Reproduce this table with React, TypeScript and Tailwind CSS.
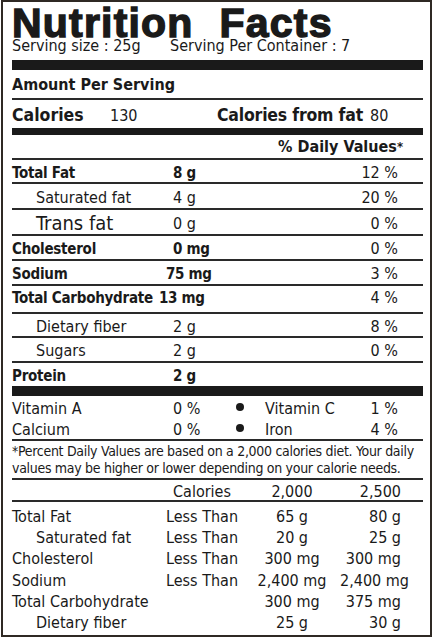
const COND = "font-['DejaVu_Sans_Condensed','Liberation_Sans',sans-serif]";

type Row = {
  label: string;
  amount?: string;
  pct?: string;
  bold?: boolean;
  indent?: boolean;
  big?: boolean;
  h: string;
  pb: string;
  shift?: string;
};

const rows: Row[] = [
  { label: 'Total Fat', amount: '8 g', pct: '12 %', bold: true, h: 'h-[22px]', pb: 'pb-[0.5px]' },
  { label: 'Saturated fat', amount: '4 g', pct: '20 %', indent: true, h: 'h-[24px]', pb: 'pb-[1.5px]' },
  { label: 'Trans fat', amount: '0 g', pct: '0 %', indent: true, big: true, h: 'h-[24px]', pb: 'pb-[1px]' },
  { label: 'Cholesterol', amount: '0 mg', pct: '0 %', bold: true, h: 'h-[23px]', pb: 'pb-[1.5px]' },
  { label: 'Sodium', amount: '75 mg', pct: '3 %', bold: true, h: 'h-[23px]', pb: 'pb-[1.5px]', shift: '-ml-[7px]' },
  { label: 'Total Carbohydrate', amount: '13 mg', pct: '4 %', bold: true, h: 'h-[26px]', pb: 'pb-[5px]', shift: '-ml-[14px]' },
  { label: 'Dietary fiber', amount: '2 g', pct: '8 %', indent: true, h: 'h-[22px]', pb: 'pb-[0.5px]' },
  { label: 'Sugars', amount: '2 g', pct: '0 %', indent: true, h: 'h-[23px]', pb: 'pb-[1.5px]' },
  { label: 'Protein', amount: '2 g', bold: true, h: 'h-[23px]', pb: 'pb-[1.5px]' },
];

const vitamins = [
  { a: 'Vitamin A', ap: '0 %', b: 'Vitamin C', bp: '1 %', h: 'h-[22px]' },
  { a: 'Calcium', ap: '0 %', b: 'Iron', bp: '4 %', h: 'h-[21px]' },
];

const refs = [
  { label: 'Total Fat', less: 'Less Than', a: '65 g', b: '80 g' },
  { label: 'Saturated fat', less: 'Less Than', a: '20 g', b: '25 g', indent: true },
  { label: 'Cholesterol', less: 'Less Than', a: '300 mg', b: '300 mg' },
  { label: 'Sodium', less: 'Less Than', a: '2,400 mg', b: '2,400 mg' },
  { label: 'Total Carbohydrate', less: '', a: '300 mg', b: '375 mg' },
  { label: 'Dietary fiber', less: '', a: '25 g', b: '30 g', indent: true },
];

function Line() {
  return <div className="h-[2px] bg-[#2a2a2a]" />;
}

export default function App() {
  return (
    <div className="w-[433px] h-[640px] bg-white">
      <div
        className={`ml-px w-[431px] h-[637px] overflow-hidden border-2 border-[#2f2924] pl-[9px] pr-[7px] text-[#1a1a1a] ${COND}`}
      >
        <div className="flex gap-[26px] pt-[5px] h-[38px] leading-[33px] text-[41px] font-bold tracking-[1.2px] font-['Liberation_Sans',sans-serif] [-webkit-text-stroke:1.4px_#1a1a1a]">
          <span>Nutrition</span>
          <span>Facts</span>
        </div>
        <div className="flex h-[12px] leading-[12px] text-[16px] whitespace-nowrap">
          <span className="w-[158px]">Serving size : 25g</span>
          <span>Serving Per Container : 7</span>
        </div>
        <div className="mt-[8px] h-[10px] bg-[#1a1a1a]" />

        <div className="pt-[3px] h-[28px] leading-[24px] text-[16px] font-bold">Amount Per Serving</div>
        <Line />
        <div className="flex items-baseline pt-[3px] h-[28px] leading-[25px] whitespace-nowrap">
          <span className="w-[98px] text-[17.5px] font-bold">Calories</span>
          <span className="w-[107px] text-[16px]">130</span>
          <span className="w-[153px] text-[17.5px] font-bold tracking-[-0.2px]">Calories from fat</span>
          <span className="text-[16px]">80</span>
        </div>
        <div className="h-[7px] bg-[#1a1a1a]" />
        <div className="flex justify-end pt-px pr-[20px] h-[23px] leading-[22px] text-[16px] font-bold">
          <span>
            % Daily Values<sup className="text-[13px] relative -top-[1px]">*</sup>
          </span>
        </div>
        <Line />

        {rows.map((r, i) => (
          <div key={r.label}>
            <div className={`flex items-end whitespace-nowrap ${r.h} ${r.pb}`}>
              <span
                className={`w-[161px] shrink-0 ${r.indent ? 'pl-[24px]' : ''} ${
                  r.big
                    ? 'text-[20px] leading-[20px]'
                    : r.bold
                    ? 'text-[15px] leading-[18px] font-bold tracking-[-0.25px]'
                    : 'text-[16px] leading-[18px]'
                }`}
              >
                {r.label}
              </span>
              <span
                className={`leading-[18px] ${r.bold ? 'text-[15px] font-bold tracking-[-0.3px]' : 'text-[16px]'} ${r.shift ?? ''}`}
              >
                {r.amount}
              </span>
              <span className="ml-auto pr-[25px] text-[16px] leading-[18px]">{r.pct}</span>
            </div>
            {i < rows.length - 1 && <Line />}
          </div>
        ))}
        <div className="h-[10px] bg-[#1a1a1a]" />

        <div className="text-[16px] leading-[18px]">
          {vitamins.map(v => (
            <div key={v.a} className={`flex items-end ${v.h}`}>
              <span className="w-[161px]">{v.a}</span>
              <span className="w-[63px]">{v.ap}</span>
              <span className="w-[8px] h-[8px] rounded-full bg-[#1a1a1a] mb-[7.5px]" />
              <span className="ml-[21px]">{v.b}</span>
              <span className="ml-auto pr-[25px]">{v.bp}</span>
            </div>
          ))}
        </div>
        <Line />
        <p className="pt-[1.5px] h-[37px] text-[14px] leading-[17px] tracking-[-0.3px] whitespace-nowrap">
          *Percent Daily Values are based on a 2,000 calories diet. Your daily
          <br />
          values may be higher or lower depending on your calorie needs.
        </p>
        <Line />

        <div className="text-[16px]">
          <div className="grid grid-cols-[148px_84px_96px_61px] pt-[2.5px] h-[20px] leading-[17.5px]">
            <span />
            <span className="text-center">Calories</span>
            <span className="text-center">2,000</span>
            <span className="text-right">2,500</span>
          </div>
          <div className="h-[1.5px] bg-[#2a2a2a]" />
          <div className="pt-[4px]">
            {refs.map(r => (
              <div
                key={r.label}
                className="grid grid-cols-[148px_84px_96px_61px] h-[21.4px] leading-[21.4px] whitespace-nowrap"
              >
                <span className={r.indent ? 'pl-[24px]' : ''}>{r.label}</span>
                <span className="text-center">{r.less}</span>
                <span className="text-center">{r.a}</span>
                <span className="text-right">{r.b}</span>
              </div>
            ))}
          </div>
        </div>
      </div>
    </div>
  );
}
